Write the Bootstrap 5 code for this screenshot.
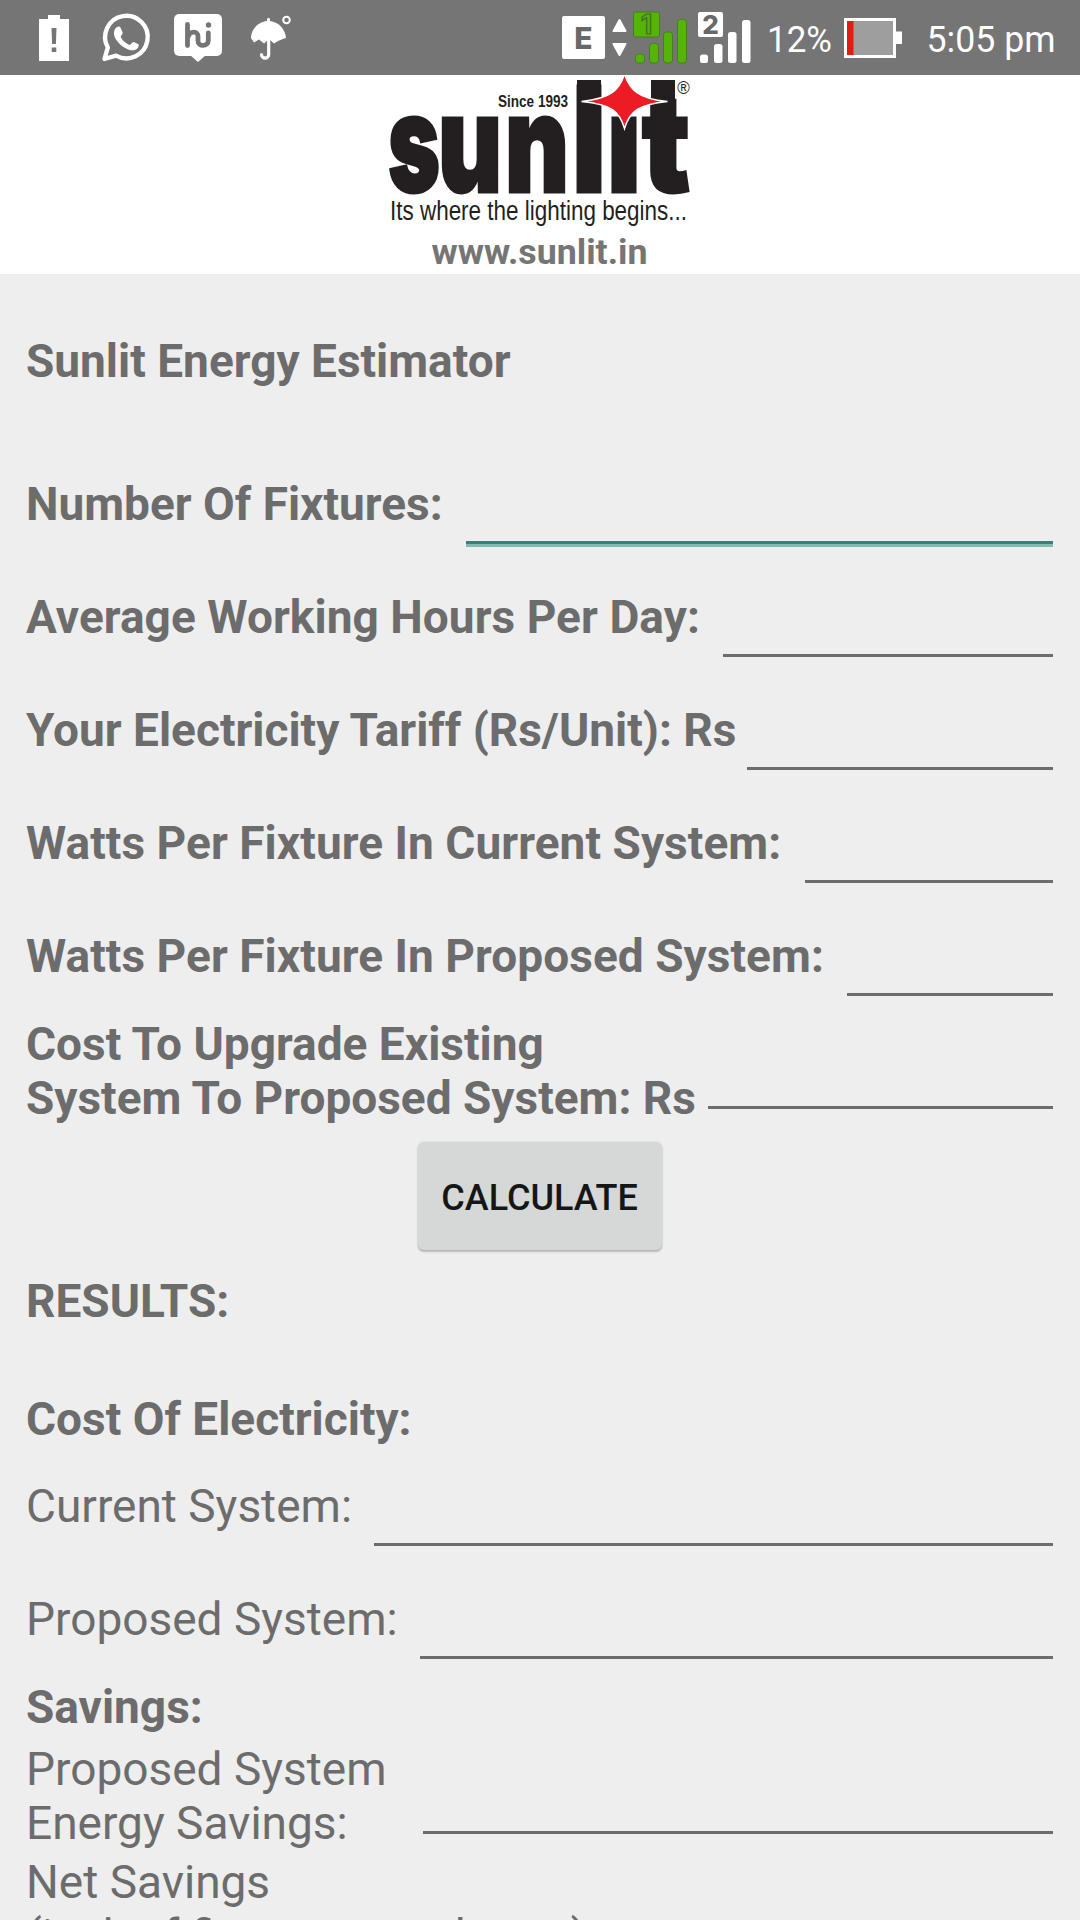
<!DOCTYPE html>
<html lang="en">
<head>
<meta charset="utf-8">
<meta name="viewport" content="width=device-width, initial-scale=1">
<title>Sunlit Energy Estimator</title>
<link href="https://cdn.jsdelivr.net/npm/bootstrap@5.3.0/dist/css/bootstrap.min.css" rel="stylesheet">
<style>
  body { font-family: Roboto, "Liberation Sans", sans-serif; font-size: 46px; line-height: 54px; color: #6c6c6c; background: #eee; height: 1920px; overflow: hidden; }
  .statusbar { height: 75px; background: #757575; }
  .brand { height: 199px; }
  .statusbar svg, .brand svg { display: block; }
  .page { padding: 60px 27px 0 26px; }
  .page-title { margin-bottom: 64px; }
  .entry { height: 113px; }
  .entry .caption { padding-top: 25px; }
  .entry-tall { height: 108px; }
  .caption { white-space: nowrap; }
  .caption-wide { letter-spacing: .05px; }
  .line-input { height: 92px; padding: 0; border: 0; border-bottom: 3px solid #6c6c6c; border-radius: 0; background: transparent; flex: none; outline: 0; }
  .line-input.active { height: 95px; border-bottom: 0; background: linear-gradient(#3d7f78 0 3px, #80bbb3 3px 6px) bottom / 100% 6px no-repeat; }
  .w-fixtures { width: 587px; } .w-hours { width: 330px; } .w-tariff { width: 306px; }
  .w-current { width: 248px; } .w-proposed { width: 206px; } .w-cost { width: 345px; }
  .w-cur-out { width: 679px; } .w-prop-out { width: 633px; } .w-energy { width: 630px; }
  .btn-calc { width: 244px; height: 108px; margin-top: 17px; padding: 4px 0 0; border: 0; border-radius: 6px; background: #d6d8d7; color: #151716; font-size: 36px; font-weight: 500; box-shadow: 0 2px 2px rgba(0,0,0,.22), 0 0 2px rgba(0,0,0,.12); }
  .results-title { margin-top: 24px; margin-bottom: 64px; }
  .cost-title { margin-bottom: 8px; }
  .savings-group { margin-top: 8px; margin-bottom: 5px; }
</style>
</head>
<body>
<header>
  <div class="statusbar">
    <svg width="1080" height="75" viewBox="0 0 1080 75" font-family="Roboto, sans-serif" fill="#fff">
      <path d="M39 19h9v-4h12v4h9v42H39z"/>
      <path fill="#757575" d="M51.500 28h5l-.6 16h-3.800zM51.700 47.500h4.600v4.500h-4.600z"/>
      <path fill="none" stroke="#fff" stroke-width="4.400" stroke-linejoin="round" d="M104.500 59l3.300-11.500a21.300 21.300 0 1 1 8.200 8.200z"/>
      <path d="M117 27c1.500-1 3-.5 3.600.8l2 4.700c.5 1.300-1.800 3.500-2 4.300 1.800 3.800 5.200 6.800 9 8.200 1-.2 3-3.500 4.300-3l4.500 2.300c1 .8-.2 3.400-1.400 4.400-3 2.500-7 1.700-10 .3-6-2.700-11-8-12.600-13-1-3.500 0-7.500 2.600-9z"/>
      <rect x="174" y="14" width="48" height="42" rx="5"/><path d="M190 55h16l-8 7z"/>
      <g fill="none" stroke="#757575" stroke-width="4.800" stroke-linecap="round"><path d="M187.500 24.500v21M188 37c2-6.500 10-6.500 10-.5v4.500c0 6 10.300 6 10.300-.5V33"/></g><circle cx="208.500" cy="25" r="2.700" fill="#757575"/>
      <path d="M267 21v-2q1.500-2.500 3 0v2c9 1 15.500 8.500 16 17l-3 1-5 2-4 2.500-5-4.500-5 4.500-5-4-5 3-3-4.500c0-8.500 7-16 16-17z"/>
      <path fill="none" stroke="#fff" stroke-width="3.200" stroke-linecap="round" d="M268.700 36v18.500a3.600 3.600 0 0 1-7.200 0"/>
      <circle cx="286.500" cy="20" r="3.300" fill="none" stroke="#fff" stroke-width="2"/>
      <rect x="562" y="16" width="43" height="43" rx="2"/>
      <text x="583.500" y="48.500" text-anchor="middle" font-family="Inter, sans-serif" font-size="30" font-weight="800" fill="#686868">E</text>
      <path stroke="#fff" stroke-width="2" stroke-linejoin="round" d="M613.500 31h12L619.500 20zM613.500 44h12L619.500 55z"/>
      <g fill="#55b408" stroke="#4a7d20" stroke-width="1"><rect x="633.500" y="12" width="26" height="25" rx="2"/><rect x="635.500" y="54" width="9" height="9" rx="3"/><rect x="649.500" y="43.500" width="9" height="19.500" rx="3"/><rect x="663.500" y="32" width="9" height="31" rx="3"/><rect x="677.500" y="19.500" width="9" height="43.500" rx="3"/></g>
      <text x="646.500" y="34" text-anchor="middle" font-family="Inter, sans-serif" font-size="27" font-weight="700" fill="#5aa81c" stroke="#42701c" stroke-width="1.200">1</text>
      <rect x="698" y="12" width="25" height="25" rx="2"/><rect x="700" y="54.500" width="8" height="8.500" rx="2.500"/><rect x="714" y="44" width="8.500" height="19" rx="2.500"/><rect x="728" y="32" width="8.500" height="31" rx="2.500"/><rect x="742" y="20" width="8.500" height="43" rx="2.500"/>
      <text x="710.500" y="34" text-anchor="middle" font-family="Inter, sans-serif" font-size="26" font-weight="800" fill="#686868">2</text>
      <text x="767" y="52" font-size="36" textLength="65" lengthAdjust="spacingAndGlyphs">12%</text>
      <path d="M844 18h52v13.500h6V44h-6v14h-52z"/><path fill="#9e9e9e" d="M847 21h46v34h-46z"/><path fill="#e51c12" d="M847 21h6.500v34H847z"/>
      <text x="926.500" y="52" font-size="36" textLength="129" lengthAdjust="spacingAndGlyphs">5:05 pm</text>
    </svg>
  </div>
  <div class="brand bg-white">
    <svg width="1080" height="199" viewBox="0 75 1080 199" fill="#231f20">
      <g font-family="Inter, sans-serif" font-weight="900" font-size="136" stroke="#231f20" stroke-width="3">
        <text x="388" y="191.500" textLength="52" lengthAdjust="spacingAndGlyphs">s</text>
        <text x="438" y="191.500" textLength="64" lengthAdjust="spacingAndGlyphs">u</text>
        <text x="505" y="191.500" textLength="64" lengthAdjust="spacingAndGlyphs">n</text>
        <text x="607" y="191.500" textLength="34" lengthAdjust="spacingAndGlyphs">i</text>
        <path fill="#fff" stroke="none" d="M602 75h44v41h-44z"/>
        <text x="572" y="191.500" font-size="146" textLength="34" lengthAdjust="spacingAndGlyphs">l</text>
        <text x="642" y="191.500" textLength="48" lengthAdjust="spacingAndGlyphs">t</text>
      </g>
      <path d="M577 80h24v60h-24zM651 80h24v40h-24z"/>
      <path fill="#ed1c24" stroke="#fff" stroke-width="1.500" d="M624.500 74c5 15 13 25 43 27.500-29 3-38 10-43 27-5-17-12-24-43-27 30-3 38-12 43-27.500z"/>
      <text x="683.500" y="93.500" text-anchor="middle" font-family="Liberation Sans, sans-serif" font-size="18" textLength="12.500" lengthAdjust="spacingAndGlyphs">®</text>
      <text x="498" y="107" font-family="Liberation Sans, sans-serif" font-weight="700" font-size="17" textLength="70" lengthAdjust="spacingAndGlyphs">Since 1993</text>
      <text x="390" y="220" font-family="Liberation Sans, sans-serif" font-size="27.500" textLength="297" lengthAdjust="spacingAndGlyphs">Its where the lighting begins...</text>
      <text x="431.500" y="263.500" font-family="Roboto, sans-serif" font-weight="700" font-size="35" textLength="216" lengthAdjust="spacingAndGlyphs" fill="#757575">www.sunlit.in</text>
    </svg>
  </div>
</header>
<main class="page">
  <div class="page-title fw-bold">Sunlit Energy Estimator</div>
  <div class="entry d-flex justify-content-between fw-bold"><label class="caption" for="f1">Number Of Fixtures:</label><input id="f1" class="line-input active w-fixtures"></div>
  <div class="entry d-flex justify-content-between fw-bold"><label class="caption caption-wide" for="f2">Average Working Hours Per Day:</label><input id="f2" class="line-input w-hours"></div>
  <div class="entry d-flex justify-content-between fw-bold"><label class="caption" for="f3">Your Electricity Tariff (Rs/Unit): Rs</label><input id="f3" class="line-input w-tariff"></div>
  <div class="entry d-flex justify-content-between fw-bold"><label class="caption caption-wide" for="f4">Watts Per Fixture In Current System:</label><input id="f4" class="line-input w-current"></div>
  <div class="entry d-flex justify-content-between fw-bold"><label class="caption caption-wide" for="f5">Watts Per Fixture In Proposed System:</label><input id="f5" class="line-input w-proposed"></div>
  <div class="entry-tall d-flex justify-content-between fw-bold"><label class="caption" for="f6">Cost To Upgrade Existing<br>System To Proposed System: Rs</label><input id="f6" class="line-input w-cost"></div>
  <button type="button" class="btn btn-calc d-block mx-auto">CALCULATE</button>
  <div class="results-title fw-bold">RESULTS:</div>
  <div class="cost-title fw-bold">Cost Of Electricity:</div>
  <div class="entry d-flex justify-content-between"><label class="caption" for="r1">Current System:</label><input id="r1" class="line-input w-cur-out" readonly></div>
  <div class="entry d-flex justify-content-between"><label class="caption" for="r2">Proposed System:</label><input id="r2" class="line-input w-prop-out" readonly></div>
  <div class="fw-bold">Savings:</div>
  <div class="savings-group entry-tall d-flex justify-content-between"><label class="caption" for="r3">Proposed System<br>Energy Savings:</label><input id="r3" class="line-input w-energy" readonly></div>
  <div>Net Savings<br>(incl. of fixture cost charge)</div>
</main>
<script src="https://cdn.jsdelivr.net/npm/bootstrap@5.3.0/dist/js/bootstrap.bundle.min.js"></script>
</body>
</html>
